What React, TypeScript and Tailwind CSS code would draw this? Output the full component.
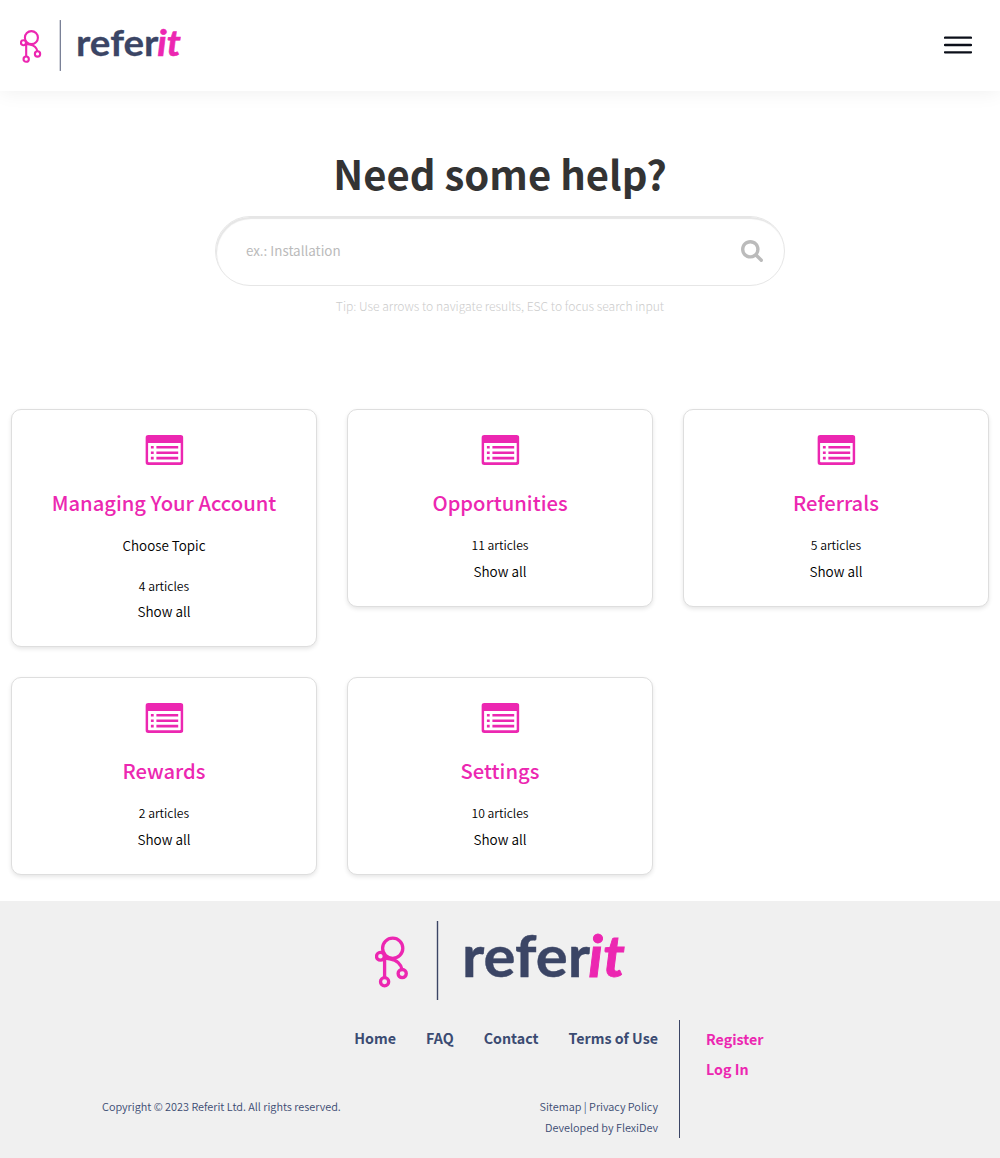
import React from "react";

function Logo({ className }: { className: string }) {
  return (
    <svg viewBox="0 0 250 79" className={className} aria-label="referit">
      <g fill="none" stroke="#ec27b1" strokeWidth="3.3">
        <circle cx="17.7" cy="27.3" r="10.1" />
        <circle cx="5.4" cy="35.3" r="3.9" />
        <circle cx="9.6" cy="60.7" r="4.1" />
        <circle cx="27.2" cy="52.6" r="4.1" />
        <path d="M9.6 56.5V36.5" />
        <path d="M9.6 36.8C14.5 38.6 19 37.6 23.2 41.6C25.6 43.9 26.6 45.8 27 48.4" />
      </g>
      <path d="M62.5 0V79" stroke="#3b4565" strokeWidth="1.4" />
      <text x="87" y="55.6" fontFamily="Lato" fontWeight="700" fontSize="57" fill="#3b4565" stroke="#3b4565" strokeWidth="0.4" textLength="128" lengthAdjust="spacingAndGlyphs">refer</text>
      <text x="213.3" y="55.8" fontFamily="Lato" fontWeight="700" fontStyle="italic" fontSize="57" fill="#ec27b1" stroke="#ec27b1" strokeWidth="0.9" textLength="36.5" lengthAdjust="spacingAndGlyphs">it</text>
    </svg>
  );
}

function ListIcon() {
  return (
    <svg viewBox="0 0 38 30" className="h-[30px] w-[38px] translate-x-[0.4px]" fill="#ec27b1" aria-hidden="true">
      <path fillRule="evenodd" d="M3 0H35Q38 0 38 3V27Q38 30 35 30H3Q0 30 0 27V3Q0 0 3 0ZM2.7 8V26.4Q2.7 27.2 3.5 27.2H34.5Q35.3 27.2 35.3 26.4V8Z" />
      <path d="M5.5 11h2.8v2.6H5.5zM5.5 16.4h2.8v2.6H5.5zM5.5 21.8h2.8v2.6H5.5zM11 11h21.8v2.6H11zM11 16.4h21.8v2.6H11zM11 21.8h21.8v2.6H11z" />
    </svg>
  );
}

function Card({ title, count, note }: { title: string; count: number; note?: string }) {
  return (
    <a className="flex flex-col items-center self-start rounded-[10px] border border-[#dedede] bg-white pt-[25px] pb-[22px] text-center text-black shadow-[0_2px_4px_rgba(0,0,0,0.1)]">
      <ListIcon />
      <h3 className="mt-[22px] text-[20.2px] leading-[32px] font-medium text-[#ec27b1]">{title}</h3>
      {note && <p className="mt-[14px] text-[13.4px] leading-[24px] font-[350]">{note}</p>}
      <p className={`text-[12.15px] leading-[24px] font-[350] ${note ? "mt-[17px]" : "mt-[14px]"}`}>{count} articles</p>
      <p className={`text-[13.5px] leading-[26px] font-[350] ${note ? "mt-0" : "mt-px"}`}>Show all</p>
    </a>
  );
}

export default function App() {
  return (
    <div className="flex h-[1158px] w-[1000px] flex-col bg-white font-['Noto_Sans_CJK_JP',sans-serif]">
      <header className="flex h-[91px] shrink-0 items-start justify-between pt-5 pr-7 pl-5 shadow-[0_0_20px_rgba(0,0,0,0.07)]">
        <Logo className="h-[51px] w-[161px]" />
        <button className="mt-4" aria-label="Menu">
          <svg viewBox="0 0 28 18" className="h-[18px] w-7" stroke="#0b0f19" strokeWidth="2.3" strokeLinecap="round">
            <path d="M1 1.7H27M1 9H27M1 16.3H27" />
          </svg>
        </button>
      </header>

      <section className="flex h-[318px] shrink-0 flex-col items-center">
        <h1 className="mt-[52px] text-[40px] leading-[60px] font-bold text-[#333]">Need some help?</h1>
        <div className="mt-[13px] flex h-[70px] w-[570px] items-center justify-between rounded-full border border-[#e6e6e6] pr-[21px] pl-[30px] shadow-[inset_1px_2px_1px_#e6e6e6]">
          <span className="pb-px text-[13.4px] text-[#bbb]">ex.: Installation</span>
          <svg viewBox="0 0 1664 1664" className="h-[22px] w-[22px]" fill="#bbb" aria-hidden="true">
            <path d="M1152 704q0-185-131.500-316.500T704 256 387.500 387.500 256 704t131.500 316.500T704 1152t316.500-131.500T1152 704zm512 832q0 52-38 90t-90 38q-54 0-90-38l-343-342q-179 124-399 124-143 0-273.500-55.500t-225-150-150-225T0 704t55.500-273.500 150-225 225-150T704 0t273.500 55.500 225 150 150 225T1408 704q0 220-124 399l343 343q37 37 37 90z" />
          </svg>
        </div>
        <p className="mt-[10px] text-[12.1px] leading-5 font-light text-[#ccc]">Tip: Use arrows to navigate results, ESC to focus search input</p>
      </section>

      <main className="grid h-[492px] shrink-0 grid-cols-3 content-start gap-[30px] px-[11px]">
        <Card title="Managing Your Account" count={4} note="Choose Topic" />
        <Card title="Opportunities" count={11} />
        <Card title="Referrals" count={5} />
        <Card title="Rewards" count={2} />
        <Card title="Settings" count={10} />
      </main>

      <footer className="flex grow flex-col bg-[#f0f0f0] pt-5 text-[#3b4b72]">
        <Logo className="h-[79px] w-[250px] self-center" />
        <div className="mt-5 flex h-[118px] pl-[102px]">
          <div className="flex w-[578px] flex-col justify-between border-r border-[#3b4565] pr-[21px]">
            <nav className="mt-[6px] flex justify-end gap-[30px] text-[14.25px] leading-6 font-bold">
              <a>Home</a>
              <a>FAQ</a>
              <a>Contact</a>
              <a>Terms of Use</a>
            </nav>
            <div className="flex justify-between text-[10.87px] leading-[21px] font-[350]">
              <p>Copyright © 2023 Referit Ltd. All rights reserved.</p>
              <p className="text-right">
                Sitemap | Privacy Policy
                <br />
                Developed by FlexiDev
              </p>
            </div>
          </div>
          <div className="flex flex-col pt-1 pl-[26px] text-[14.25px] leading-[30px] font-bold text-[#ec27b1]">
            <a>Register</a>
            <a>Log In</a>
          </div>
        </div>
      </footer>
    </div>
  );
}
